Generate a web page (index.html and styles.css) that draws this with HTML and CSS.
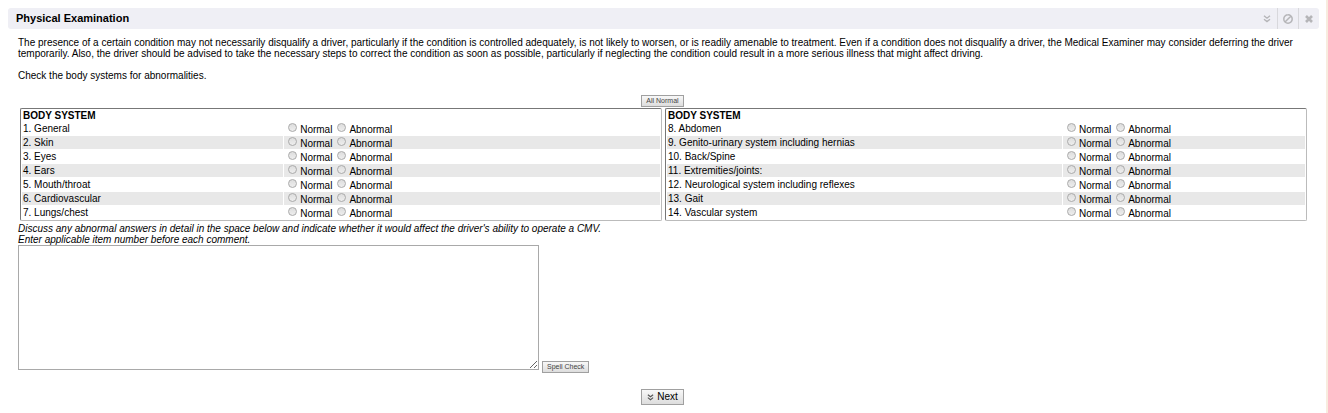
FILE: index.html
```
<!DOCTYPE html>
<html lang="en">
<head>
<meta charset="utf-8">
<title>Physical Examination</title>
<link rel="stylesheet" href="styles.css">
</head>
<body>
<main class="page">
<section class="panel">
<header class="bar">
<h1 class="title">Physical Examination</h1>
<div class="tools">
<button class="tool" type="button" aria-label="Next section"><svg width="8" height="8" viewBox="0 0 8 8"><path d="M1 .8 4 3.2 7 .8M1 4.2 4 6.6 7 4.2" fill="none" stroke="currentColor" stroke-width="1.4"/></svg></button>
<button class="tool" type="button" aria-label="Disable"><svg width="10" height="10" viewBox="0 0 10 10"><path d="M5 .8a4.2 4.2 0 1 0 0 8.400 4.200 4.200 0 1 0 0-8.400M8 2 2 8" fill="none" stroke="currentColor" stroke-width="1.500"/></svg></button>
<button class="tool" type="button" aria-label="Close"><svg width="8" height="8" viewBox="0 0 8 8"><path d="M1 1 7 7M7 1 1 7" fill="none" stroke="currentColor" stroke-width="2.600"/></svg></button>
</div>
</header>
<form class="content">
<p class="text">The presence of a certain condition may not necessarily disqualify a driver, particularly if the condition is controlled adequately, is not likely to worsen, or is readily amenable to treatment. Even if a condition does not disqualify a driver, the Medical Examiner may consider deferring the driver temporarily. Also, the driver should be advised to take the necessary steps to correct the condition as soon as possible, particularly if neglecting the condition could result in a more serious illness that might affect driving.</p>
<p class="text">Check the body systems for abnormalities.</p>
<div class="center all"><button class="btn small" type="button">All Normal</button></div>
<div class="tables">
<table class="systems">
<colgroup><col class="left-names"><col></colgroup>
<thead><tr><th colspan="2">BODY SYSTEM</th></tr></thead>
<tbody>
<tr><td>1. General</td><td><div class="choices"><label><input type="radio" name="s1">Normal</label><label><input type="radio" name="s1">Abnormal</label></div></td></tr>
<tr><td>2. Skin</td><td><div class="choices"><label><input type="radio" name="s2">Normal</label><label><input type="radio" name="s2">Abnormal</label></div></td></tr>
<tr><td>3. Eyes</td><td><div class="choices"><label><input type="radio" name="s3">Normal</label><label><input type="radio" name="s3">Abnormal</label></div></td></tr>
<tr><td>4. Ears</td><td><div class="choices"><label><input type="radio" name="s4">Normal</label><label><input type="radio" name="s4">Abnormal</label></div></td></tr>
<tr><td>5. Mouth/throat</td><td><div class="choices"><label><input type="radio" name="s5">Normal</label><label><input type="radio" name="s5">Abnormal</label></div></td></tr>
<tr><td>6. Cardiovascular</td><td><div class="choices"><label><input type="radio" name="s6">Normal</label><label><input type="radio" name="s6">Abnormal</label></div></td></tr>
<tr><td>7. Lungs/chest</td><td><div class="choices"><label><input type="radio" name="s7">Normal</label><label><input type="radio" name="s7">Abnormal</label></div></td></tr>
</tbody>
</table>
<table class="systems">
<colgroup><col class="right-names"><col></colgroup>
<thead><tr><th colspan="2">BODY SYSTEM</th></tr></thead>
<tbody>
<tr><td>8. Abdomen</td><td><div class="choices"><label><input type="radio" name="s8">Normal</label><label><input type="radio" name="s8">Abnormal</label></div></td></tr>
<tr><td>9. Genito-urinary system including hernias</td><td><div class="choices"><label><input type="radio" name="s9">Normal</label><label><input type="radio" name="s9">Abnormal</label></div></td></tr>
<tr><td>10. Back/Spine</td><td><div class="choices"><label><input type="radio" name="s10">Normal</label><label><input type="radio" name="s10">Abnormal</label></div></td></tr>
<tr><td>11. Extremities/joints:</td><td><div class="choices"><label><input type="radio" name="s11">Normal</label><label><input type="radio" name="s11">Abnormal</label></div></td></tr>
<tr><td>12. Neurological system including reflexes</td><td><div class="choices"><label><input type="radio" name="s12">Normal</label><label><input type="radio" name="s12">Abnormal</label></div></td></tr>
<tr><td>13. Gait</td><td><div class="choices"><label><input type="radio" name="s13">Normal</label><label><input type="radio" name="s13">Abnormal</label></div></td></tr>
<tr><td>14. Vascular system</td><td><div class="choices"><label><input type="radio" name="s14">Normal</label><label><input type="radio" name="s14">Abnormal</label></div></td></tr>
</tbody>
</table>
</div>
<label class="note" for="comments">Discuss any abnormal answers in detail in the space below and indicate whether it would affect the driver's ability to operate a CMV.<br>Enter applicable item number before each comment.</label>
<div class="comment">
<textarea class="area" id="comments"></textarea>
<button class="btn small" type="button">Spell Check</button>
</div>
<div class="center"><button class="btn next" type="button"><svg width="7" height="7" viewBox="0 0 8 8"><path d="M1 .8 4 3.2 7 .8M1 4.2 4 6.6 7 4.2" fill="none" stroke="#555" stroke-width="1.300"/></svg>Next</button></div>
</form>
</section>
</main>
</body>
</html>
```
FILE: styles.css
```
* { box-sizing: border-box; }
body {
  margin: 0;
  background: #fff;
  color: #000;
  font: 10px/11px "Liberation Sans", Arial, sans-serif;
}
.page {
  padding: 8px 7px 0 2px;
  border-right: 2px solid #f8ecdf;
}
.panel { border-bottom: 1px solid #eee; }
.bar {
  display: flex;
  justify-content: space-between;
  height: 21px;
  margin-left: 6px;
  padding-left: 8px;
  background: #efeff5;
  border-radius: 3px;
}
.title { margin: 0; font-size: 11px; line-height: 21px; }
.tools { display: flex; }
.tool {
  display: flex;
  align-items: center;
  justify-content: center;
  width: 21px;
  padding: 0;
  border: 0;
  border-left: 1px solid #d8d8dc;
  background: none;
  color: #b5b5b8;
}
.tool:first-child { border-left: 0; }
.content { padding: 8px 12px 8px 16px; }
.text { margin: 0 0 11px; }
.center { display: flex; justify-content: center; }
.all { padding-top: 3px; }
.btn {
  display: flex;
  align-items: center;
  justify-content: center;
  gap: 3px;
  padding: 0 5px;
  border: 1px solid #a0a0a0;
  background: linear-gradient(#f8f8f8, #ddd);
  color: #000;
  font: 10px/14px "Liberation Sans", Arial, sans-serif;
}
.small { height: 12px; padding: 0 4px; color: #444; font-size: 7px; line-height: 10px; }
.next { height: 16px; margin-top: 16px; }
.tables {
  display: grid;
  grid-template-columns: 1fr 1fr;
  gap: 3px;
  margin: 1px 0 2px 2px;
}
.systems {
  width: 100%;
  table-layout: fixed;
  border: 1px solid;
  border-color: #777 #bbb #bbb #777;
  border-radius: 2px;
  border-spacing: 1px;
}
.left-names { width: 41%; }
.right-names { width: 62%; }
.systems th { height: 11px; padding: 0 1px; text-align: left; }
.systems td { height: 13px; padding: 0 1px; }
.systems tr:nth-child(even) td { background: #e8e8e8; }
.choices { display: flex; gap: 5px; height: 13px; padding-left: 3px; }
.choices label { display: flex; gap: 3px; line-height: 15px; }
.choices input {
  appearance: none;
  width: 9px;
  height: 9px;
  margin: 1px 0 0;
  border: 1px solid #aaa;
  border-radius: 50%;
  background: linear-gradient(#ddd, #eee);
}
.note { display: block; font-style: italic; }
.comment { display: flex; align-items: flex-end; gap: 3px; }
.area {
  display: block;
  width: 521px;
  height: 125px;
  margin-bottom: 3px;
  border: 1px solid #a9a9a9;
  background: #fff;
}
```
